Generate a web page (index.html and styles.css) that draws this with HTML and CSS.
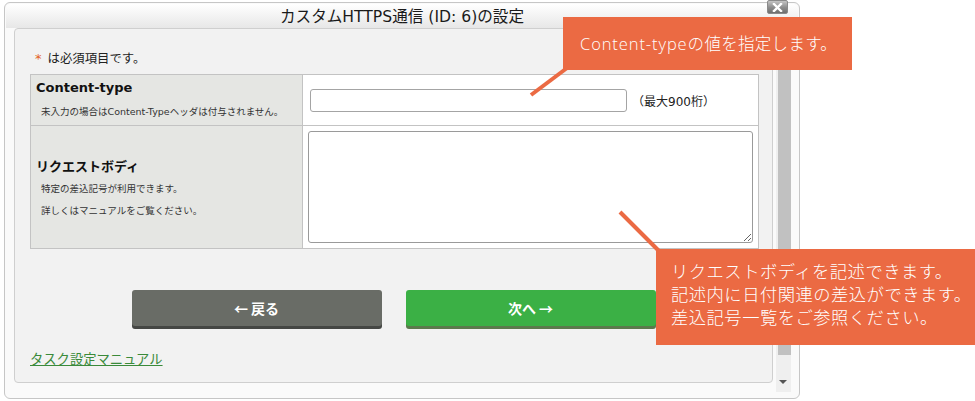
FILE: index.html
```html
<!DOCTYPE html>
<html lang="ja">
<head>
<meta charset="utf-8">
<title>カスタムHTTPS通信の設定</title>
<link rel="stylesheet" href="styles.css">
</head>
<body>
<div class="dialog">
  <div class="titlebar">カスタムHTTPS通信 (ID: 6)の設定</div>
  <span class="close" aria-label="閉じる">
    <svg width="11" height="9" viewBox="0 0 11 9"><path d="M2 1 L9 8 M9 1 L2 8" stroke="#fff" stroke-width="2.4" stroke-linecap="square"/></svg>
  </span>
  <div class="body">
    <div class="panel">
      <p class="required"><span class="ast">*</span>は必須項目です。</p>
      <table class="form">
        <colgroup><col class="c-label"><col class="c-value"></colgroup>
        <tr class="row1">
          <th>
            <div class="lbl">Content-type</div>
            <div class="note n1">未入力の場合はContent-Typeヘッダは付与されません。</div>
          </th>
          <td class="v1"><input class="text" type="text"><span class="max">（最大900桁）</span></td>
        </tr>
        <tr class="row2">
          <th>
            <div class="lbl lbl2">リクエストボディ</div>
            <div class="note n2">特定の差込記号が利用できます。</div>
            <div class="note n2">詳しくはマニュアルをご覧ください。</div>
          </th>
          <td class="v2"><textarea class="area"></textarea></td>
        </tr>
      </table>
      <div class="buttons">
        <a class="btn back">←&thinsp;戻る</a>
        <a class="btn next">次へ&thinsp;→</a>
      </div>
      <a class="manual" href="#">タスク設定マニュアル</a>
    </div>
    <div class="scrollbar">
      <div class="thumb"></div>
      <div class="arrow"></div>
    </div>
  </div>
</div>

<svg class="leaders" width="975" height="401" viewBox="0 0 975 401">
  <line x1="567" y1="68" x2="531" y2="95" stroke="#eb6a43" stroke-width="4"/>
  <line x1="620" y1="212" x2="659" y2="251" stroke="#eb6a43" stroke-width="4"/>
</svg>
<div class="callout c1"><span class="latin">Content-type</span>の値を指定します。</div>
<div class="callout c2">リクエストボディを記述できます。<br>記述内に日付関連の差込ができます。<br>差込記号一覧をご参照ください。</div>
</body>
</html>
```

FILE: styles.css
```css
html, body {
  margin: 0;
  padding: 0;
  background: #ffffff;
}

body {
  font-family: "DejaVu Sans", "Noto Sans CJK JP", sans-serif;
  color: #222;
  width: 975px;
  height: 401px;
  overflow: hidden;
  position: relative;
}

.dialog {
  position: relative;
  margin: 2px 0 0 4px;
  width: 796px;
  height: 397px;
  box-sizing: border-box;
  border: 1px solid #c6c6c6;
  border-radius: 6px;
  background: #fafafa;
  display: flex;
  flex-direction: column;
}

.titlebar {
  height: 24px;
  margin: 1px 1px 0;
  border-radius: 5px 5px 0 0;
  background: linear-gradient(#ffffff, #e7e7e7);
  text-align: center;
  font-family: "DejaVu Sans", "Noto Sans CJK JP", sans-serif;
  font-size: 15.6px;
  line-height: 26px;
  color: #1a1a1a;
}

.close {
  position: absolute;
  left: 762px;
  top: -3px;
  width: 21px;
  height: 14px;
  box-sizing: border-box;
  border: 1px solid #8a8a8a;
  border-radius: 2px;
  background: linear-gradient(#c4c4c4, #8c8c8c 55%, #6f6f6f);
  display: flex;
  align-items: center;
  justify-content: center;
}

.body {
  display: flex;
  align-items: flex-start;
  padding-left: 9px;
}

.panel {
  width: 759px;
  height: 355px;
  box-sizing: border-box;
  border: 1px solid #cfcfcf;
  border-radius: 4px;
  background: #f2f2f2;
  padding: 21px 15px 0 15px;
}

.required {
  margin: 0 0 7px;
  font-family: "Noto Sans CJK JP", sans-serif;
  font-size: 12.4px;
  line-height: 16px;
  padding-left: 5px;
  color: #222;
}

.ast {
  color: #e2621e;
  font-family: "DejaVu Sans", sans-serif;
  font-size: 13px;
  margin-right: 6px;
}

.form {
  border-collapse: collapse;
  table-layout: fixed;
  width: 728px;
}

.c-label { width: 272px; }
.c-value { width: 456px; }

.form th,
.form td {
  border: 1px solid #c3c3c3;
  padding: 0;
  vertical-align: middle;
}

.form th {
  background: #e5e6e3;
  text-align: left;
  font-weight: normal;
  padding-left: 5px;
}

.form td {
  background: #ffffff;
}

.row1 th, .row1 td { height: 50px; }
.row2 th, .row2 td { height: 122px; }

.lbl {
  font-weight: bold;
  font-size: 13px;
  line-height: 20px;
  color: #111;
}

.lbl2 {
  font-family: "Noto Sans CJK JP", sans-serif;
  padding-top: 3px;
}

.note {
  font-size: 9.5px;
  color: #333;
  padding-left: 5px;
  font-family: "DejaVu Sans", "Noto Sans CJK JP", sans-serif;
}

.n1 {
  margin-top: 4px;
  line-height: 20px;
}

.n2 {
  line-height: 22px;
}

.lbl2 + .n2 { margin-top: 2px; }

.v1 {
  padding-left: 7px !important;
}

.text {
  width: 317px;
  height: 23px;
  box-sizing: border-box;
  border: 1px solid #a4a4a4;
  border-radius: 3px;
  vertical-align: middle;
  margin: 0;
}

.max {
  margin-left: 5px;
  font-family: "DejaVu Sans", "Noto Sans CJK JP", sans-serif;
  font-size: 12px;
  vertical-align: middle;
  color: #222;
}

.v2 {
  padding-left: 5px !important;
}

.area {
  display: block;
  width: 445px;
  height: 112px;
  box-sizing: border-box;
  border: 1px solid #9a9a9a;
  border-radius: 3px;
  margin: 0;
  background: #fff;
}

.buttons {
  display: flex;
  justify-content: center;
  gap: 24px;
  margin-top: 41px;
}

.btn {
  width: 250px;
  height: 36px;
  border-radius: 3px;
  display: flex;
  align-items: center;
  justify-content: center;
  color: #fff;
  font-family: "Noto Sans CJK JP", sans-serif;
  font-weight: bold;
  font-size: 14px;
}

.back {
  background: #696c66;
  box-shadow: 0 3px 0 #454744;
}

.next {
  background: #3bb045;
  box-shadow: 0 3px 0 #5b7a4c;
}

.manual {
  display: inline-block;
  margin-top: 24px;
  font-family: "Noto Sans CJK JP", sans-serif;
  font-size: 13.3px;
  line-height: 18px;
  color: #3a8a3a;
  text-decoration: underline;
}

.scrollbar {
  position: relative;
  width: 15px;
  height: 364px;
  margin-left: 3px;
  background: #efefef;
}

.thumb {
  position: absolute;
  left: 2px;
  top: 17px;
  width: 13px;
  height: 310px;
  background: #c1c1c1;
}

.arrow {
  position: absolute;
  left: 3px;
  top: 352px;
  width: 0;
  height: 0;
  border-left: 4px solid transparent;
  border-right: 4px solid transparent;
  border-top: 4px solid #555;
}

.leaders {
  position: absolute;
  left: 0;
  top: 0;
  pointer-events: none;
}

.callout {
  position: absolute;
  background: #eb6a43;
  color: #fff;
  font-family: "Noto Sans CJK JP", sans-serif;
  font-weight: 300;
  box-sizing: border-box;
}

.latin {
  font-family: "Open Sans", "Noto Sans CJK JP", sans-serif;
  font-weight: 300;
  letter-spacing: 0.9px;
}

.c1 {
  left: 563px;
  top: 17px;
  width: 289px;
  height: 53px;
  padding-left: 17px;
  font-size: 16.5px;
  line-height: 53px;
  letter-spacing: 0.3px;
}

.c2 {
  left: 656px;
  top: 249px;
  width: 319px;
  height: 96px;
  padding: 10px 0 0 15px;
  font-size: 17.3px;
  line-height: 23px;
  letter-spacing: 0.5px;
}
```
